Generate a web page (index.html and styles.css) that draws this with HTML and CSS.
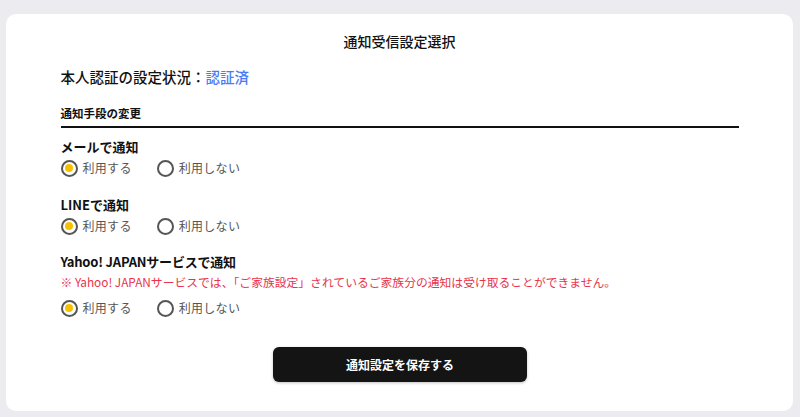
FILE: index.html
```html
<!DOCTYPE html>
<html lang="ja">
<head>
<meta charset="utf-8">
<link rel="stylesheet" href="styles.css">
</head>
<body>
<div class="card">
  <h1 class="title">通知受信設定選択</h1>
  <div class="content">
    <p class="status">本人認証の設定状況：<span class="ok">認証済</span></p>
    <h2 class="section">通知手段の変更</h2>

    <div class="group">
      <div class="label">メールで通知</div>
      <div class="radios">
        <label class="radio"><span class="dot on"></span>利用する</label>
        <label class="radio"><span class="dot"></span>利用しない</label>
      </div>
    </div>

    <div class="group">
      <div class="label">LINEで通知</div>
      <div class="radios">
        <label class="radio"><span class="dot on"></span>利用する</label>
        <label class="radio"><span class="dot"></span>利用しない</label>
      </div>
    </div>

    <div class="group group-yahoo">
      <div class="label">Yahoo! JAPANサービスで通知</div>
      <div class="note">※ Yahoo! JAPANサービスでは、「ご家族設定」されているご家族分の通知は受け取ることができません。</div>
      <div class="radios radios-note">
        <label class="radio"><span class="dot on"></span>利用する</label>
        <label class="radio"><span class="dot"></span>利用しない</label>
      </div>
    </div>

    <div class="actions">
      <button class="save">通知設定を保存する</button>
    </div>
  </div>
</div>
</body>
</html>
```

FILE: styles.css
```css
html, body {
  margin: 0;
  padding: 0;
}
body {
  background: #ebebf0;
  font-family: "Noto Sans CJK JP", "Noto Sans", sans-serif;
  color: #111;
  padding: 14px 7px 6px 6px;
  height: 417px;
  box-sizing: border-box;
}
.card {
  background: #fff;
  border-radius: 10px;
  height: 397px;
  box-sizing: border-box;
  padding-top: 17px;
}
.title {
  margin: 0;
  text-align: center;
  font-size: 14px;
  font-weight: 500;
  line-height: 20px;
}
.content {
  width: 678px;
  margin: 0 auto;
}
.status {
  margin: 15px 0 0;
  font-size: 14.5px;
  font-weight: 500;
  line-height: 22px;
}
.ok {
  color: #4a7bf5;
}
.section {
  margin: 16px 0 0;
  font-size: 11.5px;
  font-weight: 700;
  line-height: 18px;
  padding-bottom: 4px;
  border-bottom: 2px solid #111;
}
.group {
  margin-top: 9px;
}
.group + .group {
  margin-top: 17px;
}
.group + .group-yahoo {
  margin-top: 16px;
}
.label {
  font-size: 13px;
  font-weight: 700;
  line-height: 20px;
}
.group-yahoo .label {
  letter-spacing: -0.2px;
}
.radios {
  display: flex;
  gap: 25px;
  margin-top: 1px;
}
.radios-note {
  margin-top: 6px;
}
.radio {
  display: flex;
  align-items: center;
  gap: 5px;
  font-size: 12px;
  color: #555;
  line-height: 20px;
  letter-spacing: 0.3px;
}
.dot {
  width: 17px;
  height: 17px;
  box-sizing: border-box;
  border: 2px solid #555;
  border-radius: 50%;
  display: flex;
  align-items: center;
  justify-content: center;
}
.dot.on::after {
  content: "";
  width: 8px;
  height: 8px;
  border-radius: 50%;
  background: #f7c100;
}
.note {
  font-size: 11.8px;
  color: #e8334a;
  line-height: 20px;
}
.actions {
  display: flex;
  justify-content: center;
  margin-top: 29px;
}
.save {
  width: 254px;
  height: 35px;
  background: #141414;
  color: #fff;
  border: none;
  border-radius: 6px;
  font-family: inherit;
  font-size: 12px;
  font-weight: 700;
  box-shadow: 0 1px 3px rgba(0,0,0,0.25);
  margin-left: 1px;
}
```
